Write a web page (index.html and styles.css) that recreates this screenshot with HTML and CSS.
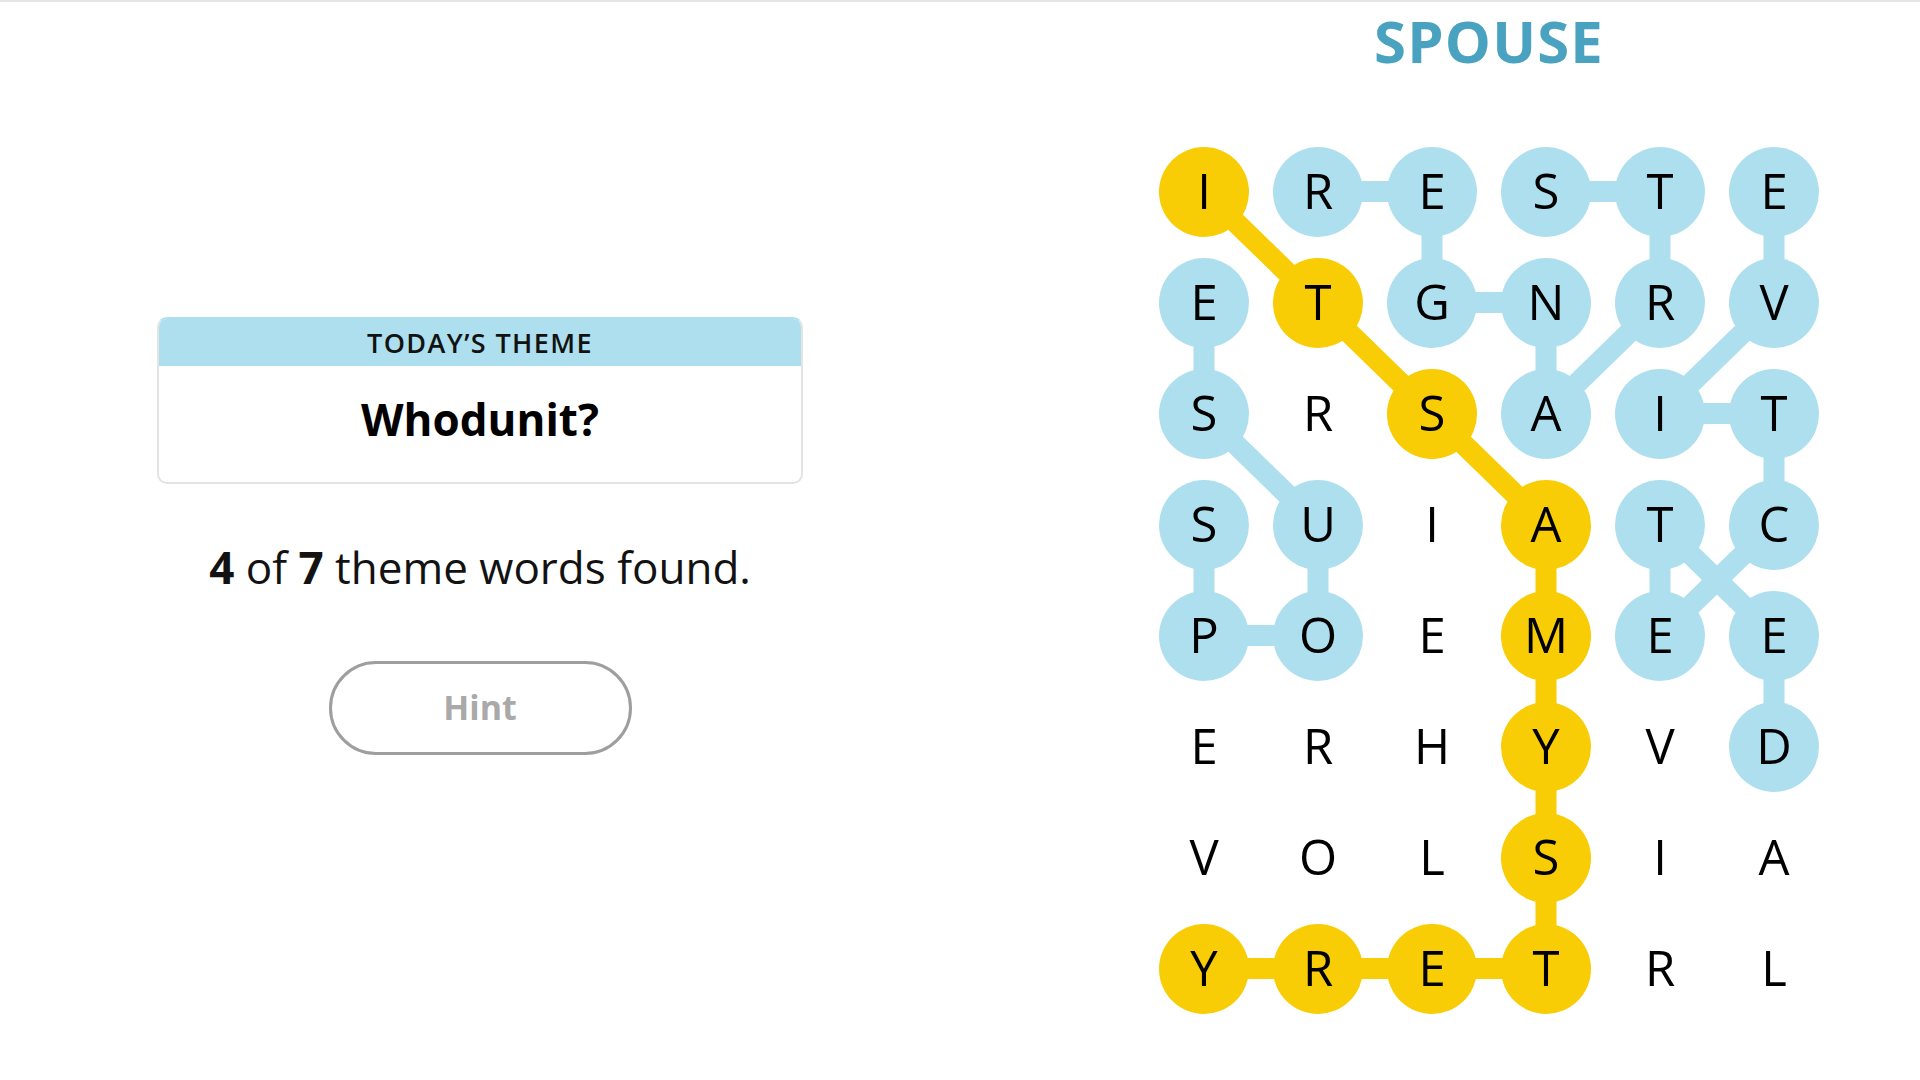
FILE: index.html
```html
<!DOCTYPE html>
<html lang="en">
<head>
<meta charset="utf-8">
<title>Strands</title>
<link rel="stylesheet" href="styles.css">
</head>
<body>
<div class="page">
  <section class="side">
    <div class="theme-card">
      <div class="theme-head">TODAY’S THEME</div>
      <div class="theme-body">Whodunit?</div>
    </div>
    <p class="progress"><b>4</b> of <b>7</b> theme words found.</p>
    <button class="hint">Hint</button>
  </section>
  <section class="play">
    <h1 class="current-word">SPOUSE</h1>
    <div class="board">
      <svg class="links" width="684" height="888" viewBox="0 0 684 888">
        <g fill="none" stroke-width="21" stroke-linejoin="round" stroke-linecap="round">
          <polyline class="blue" points="399,55.5 513,55.5 513,166.5 399,277.5 399,166.5 285,166.5 285,55.5 171,55.5"/>
          <polyline class="blue" points="627,610.5 627,499.5 513,388.5 513,499.5 627,388.5 627,277.5 513,277.5 627,166.5 627,55.5"/>
          <polyline class="blue" points="57,388.5 57,499.5 171,499.5 171,388.5 57,277.5 57,166.5"/>
          <polyline class="gold" points="57,55.5 171,166.5 285,277.5 399,388.5 399,499.5 399,610.5 399,721.5 399,832.5 285,832.5 171,832.5 57,832.5"/>
        </g>
      </svg>
      <div class="grid">
        <div class="cell"><span class="dot gold">I</span></div>
        <div class="cell"><span class="dot blue">R</span></div>
        <div class="cell"><span class="dot blue">E</span></div>
        <div class="cell"><span class="dot blue">S</span></div>
        <div class="cell"><span class="dot blue">T</span></div>
        <div class="cell"><span class="dot blue">E</span></div>

        <div class="cell"><span class="dot blue">E</span></div>
        <div class="cell"><span class="dot gold">T</span></div>
        <div class="cell"><span class="dot blue">G</span></div>
        <div class="cell"><span class="dot blue">N</span></div>
        <div class="cell"><span class="dot blue">R</span></div>
        <div class="cell"><span class="dot blue">V</span></div>

        <div class="cell"><span class="dot blue">S</span></div>
        <div class="cell"><span class="dot">R</span></div>
        <div class="cell"><span class="dot gold">S</span></div>
        <div class="cell"><span class="dot blue">A</span></div>
        <div class="cell"><span class="dot blue">I</span></div>
        <div class="cell"><span class="dot blue">T</span></div>

        <div class="cell"><span class="dot blue">S</span></div>
        <div class="cell"><span class="dot blue">U</span></div>
        <div class="cell"><span class="dot">I</span></div>
        <div class="cell"><span class="dot gold">A</span></div>
        <div class="cell"><span class="dot blue">T</span></div>
        <div class="cell"><span class="dot blue">C</span></div>

        <div class="cell"><span class="dot blue">P</span></div>
        <div class="cell"><span class="dot blue">O</span></div>
        <div class="cell"><span class="dot">E</span></div>
        <div class="cell"><span class="dot gold">M</span></div>
        <div class="cell"><span class="dot blue">E</span></div>
        <div class="cell"><span class="dot blue">E</span></div>

        <div class="cell"><span class="dot">E</span></div>
        <div class="cell"><span class="dot">R</span></div>
        <div class="cell"><span class="dot">H</span></div>
        <div class="cell"><span class="dot gold">Y</span></div>
        <div class="cell"><span class="dot">V</span></div>
        <div class="cell"><span class="dot blue">D</span></div>

        <div class="cell"><span class="dot">V</span></div>
        <div class="cell"><span class="dot">O</span></div>
        <div class="cell"><span class="dot">L</span></div>
        <div class="cell"><span class="dot gold">S</span></div>
        <div class="cell"><span class="dot">I</span></div>
        <div class="cell"><span class="dot">A</span></div>

        <div class="cell"><span class="dot gold">Y</span></div>
        <div class="cell"><span class="dot gold">R</span></div>
        <div class="cell"><span class="dot gold">E</span></div>
        <div class="cell"><span class="dot gold">T</span></div>
        <div class="cell"><span class="dot">R</span></div>
        <div class="cell"><span class="dot">L</span></div>
      </div>
    </div>
  </section>
</div>
</body>
</html>
```

FILE: styles.css
```css
* { box-sizing: border-box; }

html, body {
  margin: 0;
  padding: 0;
  background: #ffffff;
}

body {
  font-family: "Open Sans", "Liberation Sans", sans-serif;
  color: #121212;
}

.page {
  display: flex;
  min-height: 1080px;
  border-top: 2px solid #e6e6e6;
}

/* ---------- left side ---------- */
.side {
  width: 960px;
  display: flex;
  flex-direction: column;
  align-items: center;
  padding-top: 315px;
}

.theme-card {
  width: 646px;
  border: 2px solid #e3e3e3;
  border-top-color: #aedfee;
  border-radius: 10px;
  overflow: hidden;
}

.theme-head {
  height: 47px;
  background: #aedfee;
  display: flex;
  align-items: center;
  justify-content: center;
  font-size: 27px;
  font-weight: 600;
  letter-spacing: 1.4px;
  color: #121212;
}

.theme-body {
  padding: 25px 0 35px;
  text-align: center;
  font-size: 44px;
  line-height: 56px;
  font-weight: 700;
  color: #000;
}

.progress {
  margin: 55px 0 0;
  font-size: 44px;
  line-height: 56px;
  color: #121212;
}

.progress b {
  font-weight: 700;
}

.hint {
  margin-top: 66px;
  width: 303px;
  height: 94px;
  border: 3px solid #9e9e9e;
  border-radius: 47px;
  background: #ffffff;
  font-family: "Open Sans", "Liberation Sans", sans-serif;
  font-size: 34px;
  font-weight: 700;
  color: #a9a9a9;
  padding: 0 0 2px;
}

/* ---------- right side ---------- */
.play {
  margin-left: 187px;
  width: 684px;
  display: flex;
  flex-direction: column;
  align-items: center;
  padding-top: 10px;
}

.current-word {
  margin: 0 0 66px;
  font-size: 58px;
  line-height: 58px;
  font-weight: 700;
  color: #4aa2c1;
  letter-spacing: 1.2px;
}

.board {
  position: relative;
  width: 684px;
  height: 888px;
}

.links {
  position: absolute;
  left: 0;
  top: 0;
}

.links .blue { stroke: #aedfee; }
.links .gold { stroke: #f8cd05; }

.grid {
  position: relative;
  display: grid;
  grid-template-columns: repeat(6, 114px);
  grid-template-rows: repeat(8, 111px);
}

.cell {
  display: flex;
  align-items: center;
  justify-content: center;
}

.dot {
  width: 90px;
  height: 90px;
  border-radius: 50%;
  display: flex;
  align-items: center;
  justify-content: center;
  padding-bottom: 4px;
  font-size: 49px;
  font-weight: 400;
  color: #000;
}

.dot.blue { background: #aedfee; }
.dot.gold { background: #f8cd05; }
```
